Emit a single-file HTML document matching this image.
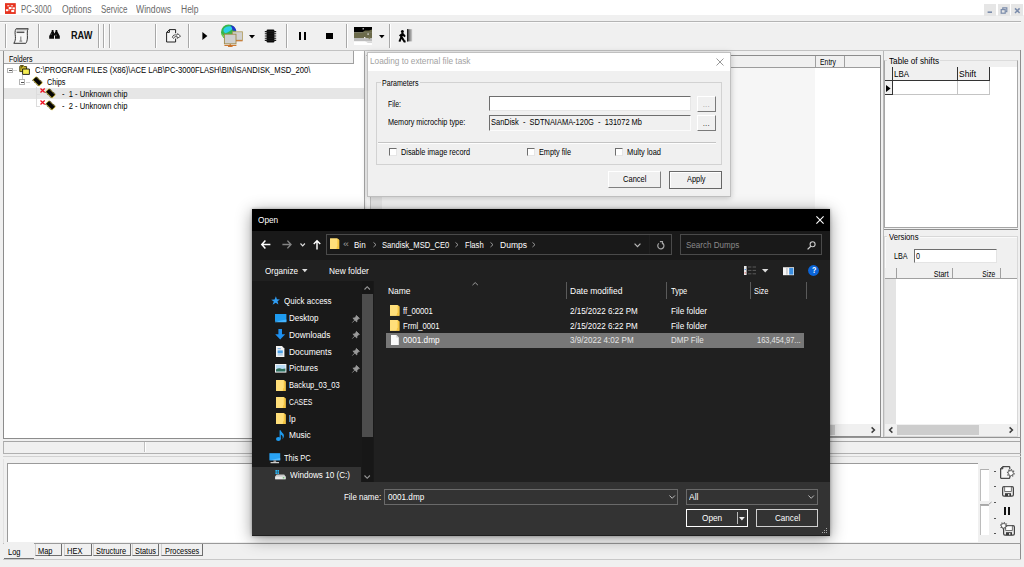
<!DOCTYPE html>
<html>
<head>
<meta charset="utf-8">
<title>PC-3000</title>
<style>
html,body{margin:0;padding:0;}
body{width:1024px;height:567px;overflow:hidden;background:#f0f0f0;font-family:"Liberation Sans",sans-serif;font-size:9px;color:#000;position:relative;}
div,span{box-sizing:border-box;}
.a{position:absolute;}
.t{position:absolute;white-space:pre;line-height:1;transform-origin:0 50%;display:block;}
svg{position:absolute;overflow:visible;}
</style>
</head>
<body>
<!-- menu bar --><div class="a" style="left:0px;top:0px;width:1024px;height:15px;background:#fff;"></div><svg style="left:5px;top:3.2px" width="10.8" height="11.1" viewBox="0 0 11 11"><rect width="11" height="11" fill="#e6321e"/><g fill="#fff"><rect x="2.3" y="2.2" width="2.1" height="1"/><rect x="5.9" y="2.2" width="2.3" height="1"/><rect x="3.8" y="4" width="2.9" height="2.1"/><rect x="7.6" y="4.3" width="2.4" height="2"/><rect x="0.9" y="6.2" width="2.4" height="2"/><rect x="6.4" y="7" width="3" height="2.1"/><rect x="3.4" y="6.4" width="1.4" height="1.2" fill="#f6b0a8"/></g></svg><span class="t" style="top:4.60px;font-size:10px;color:#6a6a6a;left:21.00px;transform:scaleX(0.7728);">PC-3000</span><span class="t" style="top:4.60px;font-size:10px;color:#6a6a6a;left:61.50px;transform:scaleX(0.8558);">Options</span><span class="t" style="top:4.60px;font-size:10px;color:#6a6a6a;left:100.50px;transform:scaleX(0.7944);">Service</span><span class="t" style="top:4.60px;font-size:10px;color:#6a6a6a;left:136.00px;transform:scaleX(0.8625);">Windows</span><span class="t" style="top:4.60px;font-size:10px;color:#6a6a6a;left:180.50px;transform:scaleX(0.8504);">Help</span><div class="a" style="left:984px;top:3.5px;width:12px;height:12.5px;background:#e6e6e6;"></div><div class="a" style="left:998px;top:3.5px;width:12px;height:12.5px;background:#e6e6e6;"></div><div class="a" style="left:1011px;top:3.5px;width:12px;height:12.5px;background:#e6e6e6;"></div><svg style="left:984px;top:3.5px" width="39" height="13" viewBox="0 0 39 13"><g stroke="#7b8cab" fill="none" stroke-width="1.2"><path d="M3.6 8.2 H8" stroke-width="1.6"/><rect x="17.2" y="5.6" width="4" height="3.6"/><path d="M18.8 5.2 V3.8 H22.8 V7.6 H21.6"/><path d="M31 4.4 L35.6 9 M35.6 4.4 L31 9" stroke-width="1.5"/></g></svg><!-- toolbar --><div class="a" style="left:0px;top:21px;width:1021px;height:1px;background:#b4b4b4;"></div><div class="a" style="left:0px;top:22px;width:1021px;height:1px;background:#fafafa;"></div><div class="a" style="left:5px;top:24px;width:1px;height:24px;background:#a8a8a8;box-shadow:1px 0 0 #fff;"></div><div class="a" style="left:37.5px;top:24px;width:1px;height:24px;background:#a8a8a8;box-shadow:1px 0 0 #fff;"></div><div class="a" style="left:98px;top:24px;width:1px;height:24px;background:#a8a8a8;box-shadow:1px 0 0 #fff;"></div><div class="a" style="left:103px;top:24px;width:1px;height:24px;background:#a8a8a8;box-shadow:1px 0 0 #fff;"></div><div class="a" style="left:109px;top:24px;width:1px;height:24px;background:#a8a8a8;box-shadow:1px 0 0 #fff;"></div><div class="a" style="left:155px;top:24px;width:1px;height:24px;background:#a8a8a8;box-shadow:1px 0 0 #fff;"></div><div class="a" style="left:188px;top:24px;width:1px;height:24px;background:#a8a8a8;box-shadow:1px 0 0 #fff;"></div><div class="a" style="left:286px;top:24px;width:1px;height:24px;background:#a8a8a8;box-shadow:1px 0 0 #fff;"></div><div class="a" style="left:346px;top:24px;width:1px;height:24px;background:#a8a8a8;box-shadow:1px 0 0 #fff;"></div><div class="a" style="left:389px;top:24px;width:1px;height:24px;background:#a8a8a8;box-shadow:1px 0 0 #fff;"></div><svg style="left:13px;top:28px" width="16" height="16" viewBox="0 0 16 16"><path d="M3.2 0.7 H15.2 C13.6 3 14.6 7 14.4 10 C14.2 12.6 13.6 14.4 12.8 15.3 H0.8 C2.2 13.6 2.6 11 2.4 8.6 C2.2 5.6 1.4 3 3.2 0.7 Z" fill="#f7f7f7" stroke="#333" stroke-width="1"/><path d="M3.4 1.6 H14" stroke="#9a9a9a" stroke-width="1.4"/><path d="M3.6 4.3 H11.4" stroke="#555" stroke-width="1.5"/><path d="M7.8 8.4 V13 M6.4 13.2 H9.2" stroke="#8a8a8a" stroke-width="1.2"/></svg><svg style="left:48.8px;top:30px" width="11" height="9" viewBox="0 0 11 9"><path d="M2.7 0 H4.5 V1.2 L5.1 2.4 V8.8 H0.2 V6 L2.1 2.4 L2.7 1.2 Z M6.5 0 H8.3 V1.2 L8.9 2.4 L10.8 6 V8.8 H5.9 V2.4 L6.5 1.2 Z" fill="#0a0a0a"/><rect x="4.6" y="3.2" width="1.8" height="2.2" fill="#0a0a0a"/><path d="M5.5 6 V8.8" stroke="#f0f0f0" stroke-width="0.9"/><path d="M1.8 5 L2.6 3.6 M7 4.6 L7.2 6.2" stroke="#8a8a8a" stroke-width="0.7"/></svg><span class="t" style="top:29.78px;font-size:10.6px;color:#111;left:70.60px;transform:scaleX(0.8657);font-weight:bold;">RAW</span><svg style="left:165.5px;top:28.5px" width="16" height="14" viewBox="0 0 16 14"><path d="M3.4 0.6 H9.6 V4.2 M9.6 9.6 V13 H0.6 V3.4 L3.4 0.6 M0.6 3.4 H3.4 V0.6" fill="#f6f6f6" stroke="#222" stroke-width="1"/><path d="M6.4 8.4 C6.6 6 9 5.4 11 6.2 L11.6 4.6 L14.6 7.2 L11.2 9.4 L11.4 7.8 C9.8 7.2 8.2 7.4 7.6 9.4 Z" fill="#fff" stroke="#444" stroke-width="0.9"/></svg><svg style="left:202px;top:32px" width="6" height="8" viewBox="0 0 6 8"><path d="M0.4 0 L5.4 4 L0.4 8 Z" fill="#000"/></svg><svg style="left:220px;top:23.5px" width="24" height="23" viewBox="0 0 24 23"><circle cx="8.6" cy="8.2" r="7.6" fill="#39b54a"/><path d="M4 4.6 C7 1.4 12 1.6 13.6 4.6 C11 5.4 9.4 8.6 5.4 9.2 C3.4 8.4 3 6.4 4 4.6 Z" fill="#29d0e8"/><path d="M10 1.2 C13.6 1.2 16 4 16.4 7 L12.6 6.6 C12.4 4 11.6 2.4 10 1.2 Z" fill="#2233cc"/><path d="M1.4 9.6 C2.4 13 5.6 15.4 9 15.6 L8 12 C5 12.4 3 11.4 1.4 9.6 Z" fill="#8fd94b"/><rect x="12.6" y="7.8" width="9.8" height="8.4" fill="#d0d0d0" stroke="#b09a5a" stroke-width="0.8"/><rect x="4.4" y="10.2" width="11.6" height="9.6" fill="#cfcfcf" stroke="#a08a4a" stroke-width="0.9"/><path d="M16 16.8 H22.6 M4.4 21.4 H16.4 M10.2 20 V22.6 M8 22.4 H12.6" stroke="#c86a1c" stroke-width="1"/></svg><svg style="left:248.5px;top:35px" width="6" height="3.4" viewBox="0 0 6 3.4"><path d="M0 0 H6 L3 3.4 Z" fill="#000"/></svg><svg style="left:263.5px;top:28.5px" width="13" height="14" viewBox="0 0 13 14"><rect x="2.6" y="0.6" width="7.8" height="12.8" rx="1.2" fill="#0a0a0a"/><path d="M0.8 2.6 H12.2 M0.8 4.8 H12.2 M0.8 7 H12.2 M0.8 9.2 H12.2 M0.8 11.4 H12.2" stroke="#1a1a1a" stroke-width="1.1"/></svg><div class="a" style="left:299.4px;top:32px;width:2px;height:8px;background:#000;"></div><div class="a" style="left:303.5px;top:32px;width:2px;height:8px;background:#000;"></div><div class="a" style="left:326px;top:33px;width:6.6px;height:6.2px;background:#000;"></div><svg style="left:353.5px;top:26.5px" width="18" height="18" viewBox="0 0 18 18"><rect width="18" height="18" fill="#fff"/><rect width="18" height="5.4" fill="#000"/><rect y="5.4" width="18" height="5.6" fill="#6b6a4a"/><path d="M8 5.4 L11 3.6 H15 L18 2.4 V5.4 Z" fill="#6b6a4a"/><rect y="11" width="18" height="3.2" fill="#bdbdbd"/><path d="M0 14.2 H11 L14 16 H18 V14.2" fill="#d8d8d8"/><rect x="8.6" y="1.2" width="1.2" height="1.2" fill="#fff"/><rect x="13.4" y="6.4" width="1.4" height="1.4" fill="#ddd"/><rect x="10" y="10" width="1.4" height="1.4" fill="#eee"/><rect x="14.6" y="10.6" width="1.6" height="1.6" fill="#8a8a6a"/></svg><svg style="left:379.4px;top:35px" width="5.6" height="3.2" viewBox="0 0 5.6 3.2"><path d="M0 0 H5.6 L2.8 3.2 Z" fill="#000"/></svg><svg style="left:398px;top:28.5px" width="14" height="14" viewBox="0 0 14 14"><defs><linearGradient id="dg" x1="0" x2="1"><stop offset="0" stop-color="#3a3a3a"/><stop offset="1" stop-color="#cfcfcf"/></linearGradient></defs><rect x="9" y="0.2" width="5.2" height="12.2" fill="url(#dg)"/><rect x="9" y="0.2" width="1.2" height="12.2" fill="#222"/><circle cx="4.4" cy="2.6" r="1.5" fill="#000"/><path d="M4.6 4 L3.4 8 L1.4 12.6 M3.8 8.4 L6.4 12.6 H7.6 M4.2 5 L1.6 7 M4.8 5 L7 7.6" stroke="#000" stroke-width="2" fill="none"/></svg><div class="a" style="left:0px;top:49.6px;width:1021px;height:1px;background:#c2c2c2;"></div><div class="a" style="left:3px;top:50.5px;width:361.5px;height:1px;background:#8a8a8a;"></div><div class="a" style="left:1020px;top:50px;width:1.4px;height:510px;background:#8e8e8e;"></div><!-- folders panel --><div class="a" style="left:3px;top:51px;width:361.5px;height:388px;background:#fff;border:1px solid #8c8c8c;border-top:none;border-right-color:#a6a6a6;"></div><div class="a" style="left:4px;top:51px;width:350px;height:12.5px;background:#f0f0f0;border-right:1px solid #a0a0a0;border-bottom:1px solid #a0a0a0;"></div><span class="t" style="top:54.75px;font-size:8.4px;color:#000;left:8.50px;transform:scaleX(0.8376);">Folders</span><div class="a" style="left:4px;top:87.8px;width:359.5px;height:11px;background:#e6e6e6;"></div><div class="a" style="left:7.2px;top:67.6px;width:5.8px;height:5.8px;background:#fff;border:1px solid #b4b4b4;"></div><div class="a" style="left:8.6px;top:70px;width:3px;height:1px;background:#555;"></div><div class="a" style="left:13.4px;top:70px;width:4px;height:1px;background:#d4d4d4;"></div><div class="a" style="left:19.4px;top:79.4px;width:5.8px;height:5.8px;background:#fff;border:1px solid #b4b4b4;"></div><div class="a" style="left:20.8px;top:81.8px;width:3px;height:1px;background:#555;"></div><div class="a" style="left:22px;top:75px;width:1px;height:4.4px;background:#c8c8c8;"></div><div class="a" style="left:25.6px;top:81.8px;width:4px;height:1px;background:#d4d4d4;"></div><div class="a" style="left:35.6px;top:87px;width:1px;height:19px;background:#dcdcdc;"></div><div class="a" style="left:35.6px;top:94px;width:4px;height:1px;background:#dcdcdc;"></div><div class="a" style="left:35.6px;top:105.6px;width:4px;height:1px;background:#dcdcdc;"></div><svg style="left:19.2px;top:64.8px" width="11" height="10" viewBox="0 0 11 10"><path d="M0.8 1.6 Q0.8 0.6 1.8 0.6 H4.4 L5.4 1.6 H7.6 V6.6 H0.8 Z" fill="#c9b92e" stroke="#3a3200" stroke-width="0.9"/><path d="M2 1.6 H4 M1.8 2.8 H3" stroke="#3a3200" stroke-width="0.7"/><path d="M3.6 4 H10.4 V9.4 H3.6 Z" fill="#f6ee52" stroke="#111" stroke-width="0.9"/></svg><svg style="left:32.1px;top:76px" width="11" height="10.6" viewBox="0 0 11 10.6"><path d="M0.3 3.7 L4.1 0.2 L10.8 6.8 L7 10.4 Z" fill="#d4bc28"/><path d="M1.1 3.8 L4.1 1.1 L10 6.8 L7 9.5 Z" fill="#050505"/><path d="M0.5 4.3 L1.3 5.1 M2.1 5.9 L2.9 6.7 M3.7 7.4 L4.5 8.2 M5.3 8.9 L6.1 9.7 M5 0.9 L5.8 1.7 M6.6 2.5 L7.4 3.3 M8.2 4 L9 4.8 M9.6 5.4 L10.3 6.1" stroke="#050505" stroke-width="0.8"/></svg><svg style="left:45.2px;top:88px" width="11" height="10.6" viewBox="0 0 11 10.6"><path d="M0.3 3.7 L4.1 0.2 L10.8 6.8 L7 10.4 Z" fill="#d4bc28"/><path d="M1.1 3.8 L4.1 1.1 L10 6.8 L7 9.5 Z" fill="#050505"/><path d="M0.5 4.3 L1.3 5.1 M2.1 5.9 L2.9 6.7 M3.7 7.4 L4.5 8.2 M5.3 8.9 L6.1 9.7 M5 0.9 L5.8 1.7 M6.6 2.5 L7.4 3.3 M8.2 4 L9 4.8 M9.6 5.4 L10.3 6.1" stroke="#050505" stroke-width="0.8"/></svg><svg style="left:39.9px;top:88px" width="5.2" height="5" viewBox="0 0 5.2 5"><path d="M0.5 0.5 L4.7 4.5 M4.7 0.5 L0.5 4.5" stroke="#ee1020" stroke-width="1.3"/></svg><svg style="left:45.2px;top:99.8px" width="11" height="10.6" viewBox="0 0 11 10.6"><path d="M0.3 3.7 L4.1 0.2 L10.8 6.8 L7 10.4 Z" fill="#d4bc28"/><path d="M1.1 3.8 L4.1 1.1 L10 6.8 L7 9.5 Z" fill="#050505"/><path d="M0.5 4.3 L1.3 5.1 M2.1 5.9 L2.9 6.7 M3.7 7.4 L4.5 8.2 M5.3 8.9 L6.1 9.7 M5 0.9 L5.8 1.7 M6.6 2.5 L7.4 3.3 M8.2 4 L9 4.8 M9.6 5.4 L10.3 6.1" stroke="#050505" stroke-width="0.8"/></svg><svg style="left:39.9px;top:99.8px" width="5.2" height="5" viewBox="0 0 5.2 5"><path d="M0.5 0.5 L4.7 4.5 M4.7 0.5 L0.5 4.5" stroke="#ee1020" stroke-width="1.3"/></svg><span class="t" style="top:65.95px;font-size:8.4px;color:#000;left:34.60px;transform:scaleX(0.9117);">C:\PROGRAM FILES (X86)\ACE LAB\PC-3000FLASH\BIN\SANDISK_MSD_200\</span><span class="t" style="top:77.85px;font-size:8.4px;color:#000;left:47.00px;transform:scaleX(0.8636);">Chips</span><span class="t" style="top:89.65px;font-size:8.4px;color:#000;left:61.50px;transform:scaleX(0.9078);">-  1 - Unknown chip</span><span class="t" style="top:101.65px;font-size:8.4px;color:#000;left:61.50px;transform:scaleX(0.9078);">-  2 - Unknown chip</span><!-- middle panel --><div class="a" style="left:366px;top:55px;width:515px;height:382px;background:#f6f6f6;border:1px solid #8c8c8c;border-left-color:#f6f6f6;"></div><div class="a" style="left:367px;top:68px;width:3.4px;height:356px;background:#fbfbfb;"></div><div class="a" style="left:370px;top:68px;width:0.8px;height:356px;background:#c4c4c4;"></div><div class="a" style="left:815px;top:56px;width:65px;height:380px;background:#fff;"></div><div class="a" style="left:370.8px;top:68px;width:11.2px;height:356px;background:#e9e9e9;"></div><div class="a" style="left:367px;top:56px;width:513px;height:11.5px;background:#f0f0f0;border-bottom:1px solid #9c9c9c;"></div><div class="a" style="left:814.5px;top:56px;width:1px;height:11px;background:#a0a0a0;"></div><div class="a" style="left:843.5px;top:56px;width:1px;height:11px;background:#a0a0a0;"></div><span class="t" style="top:57.75px;font-size:8.4px;color:#000;left:819.50px;transform:scaleX(0.8179);">Entry</span><div class="a" style="left:367px;top:424px;width:513px;height:12px;background:#f0f0f0;"></div><div class="a" style="left:378px;top:425px;width:457px;height:10px;background:#cdcdcd;"></div><svg style="left:871px;top:427px" width="4" height="6" viewBox="0 0 4 6"><path d="M0.6 0.4 L3.4 3 L0.6 5.6" stroke="#3c3c3c" stroke-width="1.5" fill="none"/></svg><!-- right panel --><div class="a" style="left:883px;top:51px;width:1px;height:386px;background:#b8b8b8;"></div><div class="a" style="left:883.5px;top:60px;width:134.2px;height:168px;background:#f0f0f0;border:1px solid #a6a6a6;border-top-color:#dcdcdc;"></div><div class="a" style="left:884.5px;top:67px;width:132.2px;height:160px;background:#fff;"></div><div class="a" style="left:887px;top:56px;width:53px;height:9px;background:#f0f0f0;"></div><span class="t" style="top:56.02px;font-size:9.4px;color:#000;left:888.70px;transform:scaleX(0.8722);">Table of shifts</span><div class="a" style="left:885px;top:67px;width:7.5px;height:13.5px;background:#f0f0f0;border-right:1.5px solid #333;border-bottom:1.5px solid #333;"></div><div class="a" style="left:892.5px;top:67px;width:65px;height:13.5px;background:#f0f0f0;border-right:1.5px solid #333;border-bottom:1.5px solid #333;"></div><div class="a" style="left:957.5px;top:67px;width:32px;height:13.5px;background:#f0f0f0;border-right:1.5px solid #333;border-bottom:1.5px solid #333;"></div><span class="t" style="top:69.22px;font-size:9.4px;color:#000;left:894.00px;transform:scaleX(0.8458);">LBA</span><span class="t" style="top:69.22px;font-size:9.4px;color:#000;left:959.00px;transform:scaleX(0.9059);">Shift</span><div class="a" style="left:885px;top:80.5px;width:7.5px;height:14px;background:#f0f0f0;border-right:1.5px solid #333;border-bottom:1.5px solid #333;"></div><div class="a" style="left:892.5px;top:80.5px;width:65px;height:14px;border-right:1px solid #c4c4c4;border-bottom:1px solid #c4c4c4;"></div><div class="a" style="left:957.5px;top:80.5px;width:32px;height:14px;border-right:1px solid #c4c4c4;border-bottom:1px solid #c4c4c4;"></div><svg style="left:886px;top:84.5px" width="5" height="7" viewBox="0 0 5 7"><path d="M0 0 L4.6 3.5 L0 7 Z" fill="#000"/></svg><div class="a" style="left:883.5px;top:228.8px;width:134.5px;height:1.2px;background:#8e8e8e;"></div><div class="a" style="left:884px;top:235.6px;width:133.5px;height:201.4px;background:#f0f0f0;border:1px solid #d8d8d8;box-shadow:inset 1px 1px 0 #fafafa;"></div><div class="a" style="left:887px;top:232px;width:33px;height:9px;background:#f0f0f0;"></div><span class="t" style="top:232.22px;font-size:9.4px;color:#000;left:888.70px;transform:scaleX(0.8202);">Versions</span><span class="t" style="top:251.55px;font-size:8.4px;color:#000;left:894.00px;transform:scaleX(0.8521);">LBA</span><div class="a" style="left:914px;top:248.5px;width:83px;height:14.5px;background:#fff;border-top:1.5px solid #6e6e6e;border-left:1.5px solid #6e6e6e;border-bottom:1px solid #e4e4e4;border-right:1px solid #e4e4e4;"></div><span class="t" style="top:251.55px;font-size:8.4px;color:#000;left:916.00px;transform:scaleX(0.8562);">0</span><div class="a" style="left:885px;top:268px;width:131.5px;height:156px;background:#fff;"></div><div class="a" style="left:885px;top:268px;width:131.5px;height:10.5px;background:#f0f0f0;border-bottom:1px solid #a0a0a0;"></div><div class="a" style="left:885px;top:278.5px;width:10.5px;height:145.5px;background:#e4e4e4;"></div><div class="a" style="left:895.5px;top:268px;width:1px;height:10px;background:#a0a0a0;"></div><div class="a" style="left:951.5px;top:268px;width:1px;height:10px;background:#a0a0a0;"></div><div class="a" style="left:1000px;top:268px;width:1px;height:10px;background:#a0a0a0;"></div><span class="t" style="top:269.55px;font-size:8.4px;color:#000;right:75.50px;transform-origin:100% 50%;transform:scaleX(0.8481);">Start</span><span class="t" style="top:269.55px;font-size:8.4px;color:#000;right:29.00px;transform-origin:100% 50%;transform:scaleX(0.7977);">Size</span><div class="a" style="left:885px;top:424px;width:131.5px;height:12px;background:#f0f0f0;"></div><div class="a" style="left:897px;top:425px;width:82px;height:10px;background:#cdcdcd;"></div><svg style="left:888.5px;top:427px" width="4" height="6" viewBox="0 0 4 6"><path d="M3.4 0.4 L0.6 3 L3.4 5.6" stroke="#3c3c3c" stroke-width="1.5" fill="none"/></svg><svg style="left:1008.5px;top:427px" width="4" height="6" viewBox="0 0 4 6"><path d="M0.6 0.4 L3.4 3 L0.6 5.6" stroke="#3c3c3c" stroke-width="1.5" fill="none"/></svg><div class="a" style="left:366px;top:436.7px;width:655px;height:1.5px;background:#949494;"></div><!-- status + log --><div class="a" style="left:3px;top:441px;width:1017px;height:12px;background:#f0f0f0;border-top:1px solid #a6a6a6;border-left:1px solid #b0b0b0;"></div><div class="a" style="left:144px;top:442px;width:1px;height:10px;background:#c0c0c0;"></div><div class="a" style="left:145px;top:442px;width:1px;height:10px;background:#fff;"></div><div class="a" style="left:3px;top:453px;width:1018px;height:1px;background:#b0b0b0;"></div><div class="a" style="left:3px;top:456px;width:1018px;height:1px;background:#d2d2d2;"></div><div class="a" style="left:3px;top:458.5px;width:1018px;height:85px;background:#f0f0f0;border-left:1px solid #e2e2e2;border-right:1px solid #9a9a9a;border-bottom:1px solid #9a9a9a;"></div><div class="a" style="left:7px;top:463px;width:971px;height:78.5px;background:#fff;border-top:1px solid #9a9a9a;border-left:1px solid #9a9a9a;"></div><div class="a" style="left:980.4px;top:469px;width:9px;height:32px;background:#fff;border-top:1px solid #b0b0b0;border-left:1px solid #bcbcbc;"></div><div class="a" style="left:980.4px;top:505.3px;width:9px;height:30.2px;background:#fff;border-top:1px solid #b0b0b0;border-left:1px solid #bcbcbc;"></div><svg style="left:979px;top:498.6px" width="14" height="8" viewBox="0 0 14 8"><path d="M1 5.6 H9.4 L12.6 3" stroke="#a0a0a0" stroke-width="1" fill="none"/></svg><div class="a" style="left:993.5px;top:471px;width:2.5px;height:1px;background:#555;"></div><div class="a" style="left:993.5px;top:486.2px;width:2.5px;height:1px;background:#555;"></div><div class="a" style="left:993.5px;top:502.4px;width:2.5px;height:1px;background:#555;"></div><div class="a" style="left:993.5px;top:518px;width:2.5px;height:1px;background:#555;"></div><div class="a" style="left:993.5px;top:533.2px;width:2.5px;height:1px;background:#555;"></div><svg style="left:1000px;top:466px" width="15" height="13" viewBox="0 0 15 13"><path d="M2.6 0.7 H9.8 V3.4 M9.8 10.4 V12.3 H0.7 V2.6 L2.6 0.7 M0.7 2.8 H2.8 V0.7" fill="#f6f6f6" stroke="#222" stroke-width="1"/><polygon points="14.62,7.87 12.54,8.27 12.95,10.35 11.20,9.16 10.03,10.92 9.63,8.84 7.55,9.25 8.74,7.50 6.98,6.33 9.06,5.93 8.65,3.85 10.40,5.04 11.57,3.28 11.97,5.36 14.05,4.95 12.86,6.70" fill="#fff" stroke="#555" stroke-width="0.9"/></svg><svg style="left:1001.5px;top:486px" width="12" height="11" viewBox="0 0 12 11"><rect x="0.6" y="0.6" width="10.8" height="9.6" rx="1.4" fill="#e8e8e8" stroke="#444" stroke-width="1.2"/><rect x="2.7" y="0.8" width="6.6" height="4.6" fill="#fff" stroke="#555" stroke-width="0.8"/><rect x="3" y="7.2" width="6" height="3" fill="#3a3a3a"/><rect x="6" y="8" width="1.4" height="1.8" fill="#ddd"/></svg><div class="a" style="left:1004.1px;top:507px;width:1.8px;height:7.6px;background:#111;"></div><div class="a" style="left:1008px;top:507px;width:1.8px;height:7.6px;background:#111;"></div><svg style="left:1002.5px;top:525px" width="12" height="11" viewBox="0 0 12 11"><rect x="0.6" y="0.6" width="10.8" height="9.6" rx="1.4" fill="#e8e8e8" stroke="#444" stroke-width="1.2"/><rect x="2.7" y="0.8" width="6.6" height="4.6" fill="#fff" stroke="#555" stroke-width="0.8"/><rect x="3" y="7.2" width="6" height="3" fill="#3a3a3a"/><rect x="6" y="8" width="1.4" height="1.8" fill="#ddd"/></svg><svg style="left:999.6px;top:522px" width="7.4" height="7.4" viewBox="0 0 7.4 7.4"><polygon points="7.13,4.40 5.28,4.76 5.63,6.62 4.06,5.56 3.00,7.13 2.64,5.28 0.78,5.63 1.84,4.06 0.27,3.00 2.12,2.64 1.77,0.78 3.34,1.84 4.40,0.27 4.76,2.12 6.62,1.77 5.56,3.34" fill="#fff" stroke="#555" stroke-width="0.9"/></svg><!-- tabs --><div class="a" style="left:4px;top:542px;width:30px;height:16.6px;background:#f0f0f0;border-bottom:1.6px solid #747474;"></div><span class="t" style="top:547.83px;font-size:9px;color:#000;left:8.40px;transform:scaleX(0.8316);">Log</span><div class="a" style="left:34.5px;top:543.5px;width:27.5px;height:12.5px;background:#f0f0f0;border-left:1px solid #d0d0d0;border-right:1.5px solid #6e6e6e;border-bottom:1.5px solid #6e6e6e;"></div><span class="t" style="top:546.63px;font-size:9px;color:#000;left:38.20px;transform:scaleX(0.8278);">Map</span><div class="a" style="left:63.5px;top:543.5px;width:28px;height:12.5px;background:#f0f0f0;border-left:1px solid #d0d0d0;border-right:1.5px solid #6e6e6e;border-bottom:1.5px solid #6e6e6e;"></div><span class="t" style="top:546.63px;font-size:9px;color:#000;left:67.40px;transform:scaleX(0.8317);">HEX</span><div class="a" style="left:93px;top:543.5px;width:37.5px;height:12.5px;background:#f0f0f0;border-left:1px solid #d0d0d0;border-right:1.5px solid #6e6e6e;border-bottom:1.5px solid #6e6e6e;"></div><span class="t" style="top:546.63px;font-size:9px;color:#000;left:96.40px;transform:scaleX(0.8216);">Structure</span><div class="a" style="left:131.5px;top:543.5px;width:27.5px;height:12.5px;background:#f0f0f0;border-left:1px solid #d0d0d0;border-right:1.5px solid #6e6e6e;border-bottom:1.5px solid #6e6e6e;"></div><span class="t" style="top:546.63px;font-size:9px;color:#000;left:134.80px;transform:scaleX(0.8230);">Status</span><div class="a" style="left:160.5px;top:543.5px;width:42px;height:12.5px;background:#f0f0f0;border-left:1px solid #d0d0d0;border-right:1.5px solid #6e6e6e;border-bottom:1.5px solid #6e6e6e;"></div><span class="t" style="top:546.63px;font-size:9px;color:#000;left:164.60px;transform:scaleX(0.8137);">Processes</span><div class="a" style="left:3px;top:558.5px;width:1018px;height:1px;background:#c8c8c8;"></div><!-- loading dialog --><div class="a" style="left:366.8px;top:52px;width:363.8px;height:144.8px;background:#f0f0f0;border:1px solid #c0c0c0;box-shadow:0 1px 6px rgba(0,0,0,.22);"></div><div class="a" style="left:367.8px;top:53px;width:361.8px;height:17.5px;background:#fff;"></div><span class="t" style="top:57.43px;font-size:9px;color:#a2a2a2;left:370.00px;transform:scaleX(0.9172);">Loading to external file task</span><svg style="left:715.5px;top:57.5px" width="8" height="8" viewBox="0 0 8 8"><path d="M0.5 0.5 L7.5 7.5 M7.5 0.5 L0.5 7.5" stroke="#8c8c8c" stroke-width="0.9"/></svg><div class="a" style="left:376px;top:82px;width:345.5px;height:82.5px;border:1px solid #d2d2d2;"></div><div class="a" style="left:380.5px;top:78px;width:39px;height:9px;background:#f0f0f0;"></div><span class="t" style="top:78.75px;font-size:8.4px;color:#000;left:382.00px;transform:scaleX(0.8430);">Parameters</span><span class="t" style="top:99.75px;font-size:8.4px;color:#000;left:388.00px;transform:scaleX(0.8213);">File:</span><span class="t" style="top:118.45px;font-size:8.4px;color:#000;left:388.00px;transform:scaleX(0.8685);">Memory microchip type:</span><div class="a" style="left:489px;top:96px;width:202px;height:15.4px;background:#fff;border-top:1.5px solid #6e6e6e;border-left:1.5px solid #6e6e6e;border-bottom:1px solid #e6e6e6;border-right:1px solid #e6e6e6;"></div><div class="a" style="left:489px;top:114.6px;width:202px;height:16px;background:#f0f0f0;border-top:1.5px solid #6e6e6e;border-left:1.5px solid #6e6e6e;border-bottom:1px solid #fbfbfb;border-right:1px solid #fbfbfb;"></div><span class="t" style="top:117.75px;font-size:8.4px;color:#000;left:491.00px;transform:scaleX(0.8912);">SanDisk  -  SDTNAIAMA-120G  -  131072 Mb</span><div class="a" style="left:697px;top:95.8px;width:18.5px;height:16.4px;background:#f0f0f0;border-top:1px solid #fff;border-left:1px solid #fff;border-right:1.5px solid #7a7a7a;border-bottom:1.5px solid #7a7a7a;"></div><div class="a" style="left:697px;top:114.6px;width:18.5px;height:16.4px;background:#f0f0f0;border-top:1px solid #fff;border-left:1px solid #fff;border-right:1.5px solid #7a7a7a;border-bottom:1.5px solid #7a7a7a;"></div><span class="t" style="top:100.15px;font-size:8.4px;color:#9a9a9a;left:703.20px;transform:scaleX(0.7454);letter-spacing:0.8px;">...</span><span class="t" style="top:118.55px;font-size:8.4px;color:#111;left:703.20px;transform:scaleX(0.7454);letter-spacing:0.8px;">...</span><div class="a" style="left:378px;top:142px;width:337.5px;height:1px;background:#c4c4c4;"></div><div class="a" style="left:378px;top:143px;width:337.5px;height:1px;background:#fdfdfd;"></div><div class="a" style="left:388.5px;top:148px;width:8px;height:8px;background:#fff;border-top:1.5px solid #6e6e6e;border-left:1.5px solid #6e6e6e;border-bottom:1px solid #e6e6e6;border-right:1px solid #e6e6e6;"></div><div class="a" style="left:526.8px;top:148px;width:8px;height:8px;background:#fff;border-top:1.5px solid #6e6e6e;border-left:1.5px solid #6e6e6e;border-bottom:1px solid #e6e6e6;border-right:1px solid #e6e6e6;"></div><div class="a" style="left:615px;top:148px;width:8px;height:8px;background:#fff;border-top:1.5px solid #6e6e6e;border-left:1.5px solid #6e6e6e;border-bottom:1px solid #e6e6e6;border-right:1px solid #e6e6e6;"></div><span class="t" style="top:147.85px;font-size:8.4px;color:#000;left:401.00px;transform:scaleX(0.8719);">Disable image record</span><span class="t" style="top:147.85px;font-size:8.4px;color:#000;left:539.00px;transform:scaleX(0.8700);">Empty file</span><span class="t" style="top:147.85px;font-size:8.4px;color:#000;left:627.30px;transform:scaleX(0.8907);">Multy load</span><div class="a" style="left:608.3px;top:170.5px;width:52.4px;height:17.9px;background:#f0f0f0;border-top:1px solid #fff;border-left:1px solid #fff;border-right:1.6px solid #808080;border-bottom:1.6px solid #808080;"></div><div class="a" style="left:669.4px;top:170.5px;width:52.7px;height:18.5px;background:#f0f0f0;border:1.3px solid #6a6a6a;border-right:1.9px solid #666;border-bottom:1.9px solid #666;box-shadow:inset 1px 1px 0 #fff;"></div><span class="t" style="top:175.35px;font-size:8.4px;color:#000;left:623.00px;transform:scaleX(0.9011);">Cancel</span><span class="t" style="top:175.35px;font-size:8.4px;color:#000;left:686.50px;transform:scaleX(0.8829);">Apply</span><!-- open dialog --><div class="a" style="left:252px;top:209px;width:578px;height:326.5px;background:#202020;box-shadow:0 3px 15px rgba(0,0,0,.42),0 0 3px rgba(0,0,0,.3);"></div><div class="a" style="left:252px;top:209px;width:578px;height:21.6px;background:#000;"></div><span class="t" style="top:216.17px;font-size:9.2px;color:#fff;left:258.00px;transform:scaleX(0.8984);">Open</span><svg style="left:815.6px;top:216px" width="8" height="8" viewBox="0 0 8 8"><path d="M0.4 0.4 L7.6 7.6 M7.6 0.4 L0.4 7.6" stroke="#fff" stroke-width="1.1"/></svg><div class="a" style="left:252px;top:231px;width:578px;height:29px;background:#191919;"></div><svg style="left:261px;top:240px" width="10" height="9" viewBox="0 0 10 9"><path d="M4.4 0.6 L0.8 4.5 L4.4 8.4 M0.8 4.5 H9.4" stroke="#fff" stroke-width="1.5" fill="none"/></svg><svg style="left:282px;top:240px" width="10" height="9" viewBox="0 0 10 9"><path d="M5.4 0.6 L9 4.5 L5.4 8.4 M9 4.5 H0.4" stroke="#848484" stroke-width="1.4" fill="none"/></svg><svg style="left:300.4px;top:242.8px" width="5.4" height="3.6" viewBox="0 0 5.4 3.6"><path d="M0.5 0.5 L2.7 2.8 L4.9 0.5" stroke="#ddd" stroke-width="1.2" fill="none"/></svg><svg style="left:313.4px;top:240.4px" width="8" height="9.6" viewBox="0 0 8 10"><path d="M0.6 4.2 L4 0.8 L7.4 4.2 M4 0.8 V9.8" stroke="#fff" stroke-width="1.5" fill="none"/></svg><div class="a" style="left:326.2px;top:234.3px;width:345.8px;height:20.6px;background:#191919;border:1px solid #4a4a4a;"></div><div class="a" style="left:648.6px;top:235.3px;width:1px;height:18.6px;background:#1f1f1f;"></div><svg style="left:329.7px;top:238.3px" width="9.2" height="11.6" viewBox="0 0 9.6 11"><path d="M0 0.4 Q0 0 0.4 0 H7.6 L9.6 1.6 V11 H0 Z" fill="#ffd966"/><path d="M7.6 0 L9.6 1.6 V11 H6.6 L7 8.6 L7.6 8 Z" fill="#f5c542"/><path d="M0 0 H7.6 V8 L7 8.6 L6.6 11 H0 Z" fill="#ffdf7a"/></svg><span class="t" style="top:239.22px;font-size:9.4px;color:#999;left:343.00px;transform:scaleX(1.1497);">«</span><span class="t" style="top:240.67px;font-size:9.2px;color:#fff;left:354.40px;transform:scaleX(0.8734);">Bin</span><span class="t" style="top:240.67px;font-size:9.2px;color:#fff;left:382.00px;transform:scaleX(0.8288);">Sandisk_MSD_CE0</span><span class="t" style="top:240.67px;font-size:9.2px;color:#fff;left:464.50px;transform:scaleX(0.8323);">Flash</span><span class="t" style="top:240.67px;font-size:9.2px;color:#fff;left:499.60px;transform:scaleX(0.9275);">Dumps</span><svg style="left:372.8px;top:242.2px" width="3.6" height="5.4" viewBox="0 0 3.6 5.4"><path d="M0.5 0.4 L3 2.7 L0.5 5" stroke="#9a9a9a" stroke-width="1" fill="none"/></svg><svg style="left:455px;top:242.2px" width="3.6" height="5.4" viewBox="0 0 3.6 5.4"><path d="M0.5 0.4 L3 2.7 L0.5 5" stroke="#9a9a9a" stroke-width="1" fill="none"/></svg><svg style="left:490.2px;top:242.2px" width="3.6" height="5.4" viewBox="0 0 3.6 5.4"><path d="M0.5 0.4 L3 2.7 L0.5 5" stroke="#9a9a9a" stroke-width="1" fill="none"/></svg><svg style="left:532.2px;top:242.2px" width="3.6" height="5.4" viewBox="0 0 3.6 5.4"><path d="M0.5 0.4 L3 2.7 L0.5 5" stroke="#9a9a9a" stroke-width="1" fill="none"/></svg><svg style="left:633.8px;top:243.4px" width="7" height="4.4" viewBox="0 0 7.4 4.6"><path d="M0.6 0.6 L3.7 3.8 L6.8 0.6" stroke="#b8b8b8" stroke-width="1.3" fill="none"/></svg><svg style="left:656.6px;top:240.8px" width="7.6" height="8.4" viewBox="0 0 7.6 8.4"><path d="M4.9 1.9 A3.1 3.1 0 1 1 1.9 2.4" stroke="#a6a6a6" stroke-width="1.2" fill="none"/><path d="M2.9 0.6 H5.5 V3.2" stroke="#a6a6a6" stroke-width="1.1" fill="none"/></svg><div class="a" style="left:680.2px;top:234.3px;width:141.4px;height:20.6px;background:#191919;border:1px solid #4a4a4a;"></div><span class="t" style="top:240.67px;font-size:9.2px;color:#8a8a8a;left:686.40px;transform:scaleX(0.8755);">Search Dumps</span><svg style="left:807px;top:240.6px" width="9" height="9" viewBox="0 0 9 9"><circle cx="5.6" cy="3.3" r="2.5" stroke="#ccc" stroke-width="1.1" fill="none"/><path d="M3.8 5.2 L0.6 8.4" stroke="#ccc" stroke-width="1.3"/></svg><span class="t" style="top:266.77px;font-size:9.2px;color:#fff;left:265.00px;transform:scaleX(0.8852);">Organize</span><svg style="left:301.6px;top:269.2px" width="5.6" height="3.2" viewBox="0 0 5.6 3.2"><path d="M0 0 H5.6 L2.8 3.2 Z" fill="#ddd"/></svg><span class="t" style="top:266.77px;font-size:9.2px;color:#fff;left:328.60px;transform:scaleX(0.9062);">New folder</span><svg style="left:744px;top:266px" width="13" height="9" viewBox="0 0 13 9"><rect x="0" y="0" width="2.6" height="9" fill="#e8e8e8"/><rect x="0.6" y="3" width="1.4" height="1" fill="#5a8fd8"/><rect x="0.6" y="6.4" width="1.4" height="1" fill="#d85a5a"/><path d="M4 1 H7.4 M8.6 1 H12 M4 4.4 H7.4 M8.6 4.4 H12 M4 7.8 H7.4 M8.6 7.8 H12" stroke="#626262" stroke-width="0.9"/></svg><svg style="left:762px;top:269px" width="6.4" height="3.6" viewBox="0 0 6.4 3.6"><path d="M0 0 H6.4 L3.2 3.6 Z" fill="#ddd"/></svg><svg style="left:783.2px;top:266.6px" width="11" height="8.2" viewBox="0 0 11 8.2"><rect width="11" height="8.2" fill="#f6f6f6"/><rect width="11" height="0.9" fill="#bdbdbd"/><rect x="3" y="1" width="1.8" height="6.6" fill="#cfcfcf"/><rect x="6.2" y="1" width="4.2" height="6.6" fill="#3b8ee0"/></svg><svg style="left:808.2px;top:265.2px" width="11" height="11" viewBox="0 0 11 11"><circle cx="5.5" cy="5.5" r="5.4" fill="#0a64d8"/></svg><span class="t" style="top:266.13px;font-size:9px;color:#fff;left:811.60px;transform:scaleX(0.8000);font-weight:bold;">?</span><div class="a" style="left:252px;top:281px;width:122px;height:201.5px;background:#191919;"></div><div class="a" style="left:362px;top:281px;width:11px;height:201.5px;background:#171717;"></div><div class="a" style="left:362px;top:294px;width:11px;height:143px;background:#4d4d4d;"></div><svg style="left:364.4px;top:286px" width="6.4" height="4" viewBox="0 0 6.4 4"><path d="M0.5 3.5 L3.2 0.7 L5.9 3.5" stroke="#999" stroke-width="1.1" fill="none"/></svg><svg style="left:364.4px;top:475px" width="6.4" height="4" viewBox="0 0 6.4 4"><path d="M0.5 0.5 L3.2 3.3 L5.9 0.5" stroke="#999" stroke-width="1.1" fill="none"/></svg><div class="a" style="left:252px;top:467px;width:109px;height:15.5px;background:#333;"></div><svg style="left:271px;top:296.4px" width="9" height="9" viewBox="0 0 9 9"><path d="M4.9 0.2 L5.9 3.3 L8.9 3.4 L6.5 5.3 L7.4 8.6 L4.7 6.7 L1.6 8.8 L2.8 5.4 L0.2 3.8 L3.6 3.4 Z" fill="#2f9df4"/></svg><span class="t" style="top:297.37px;font-size:9.2px;color:#fff;left:283.70px;transform:scaleX(0.8711);">Quick access</span><svg style="left:274.6px;top:313.8px" width="11.4" height="8.2" viewBox="0 0 11.4 8.8" preserveAspectRatio="none"><rect width="11.4" height="8.2" fill="#1e9bf0"/><path d="M0 8.2 L11.4 6 V8.8 H0 Z" fill="#45b4ff"/></svg><span class="t" style="top:314.07px;font-size:9.2px;color:#fff;left:289.20px;transform:scaleX(0.8778);">Desktop</span><svg style="left:275px;top:329.4px" width="10.4" height="11" viewBox="0 0 10.4 11"><path d="M3.4 0 H7 V5.2 H10.2 L5.2 10.6 L0.2 5.2 H3.4 Z" fill="#1e90f0"/></svg><span class="t" style="top:330.87px;font-size:9.2px;color:#fff;left:289.20px;transform:scaleX(0.9108);">Downloads</span><svg style="left:276.4px;top:346px" width="8.4" height="11" viewBox="0 0 8.4 11"><path d="M0 0 H6 L8.4 2.4 V11 H0 Z" fill="#f2f2f2"/><rect x="1.6" y="2.2" width="3.2" height="1" fill="#6aa7e0"/><rect x="1.6" y="4.4" width="5.2" height="3" fill="#4aa0e8"/><rect x="1.6" y="8.4" width="5.2" height="1" fill="#8ab8e0"/></svg><span class="t" style="top:347.67px;font-size:9.2px;color:#fff;left:289.20px;transform:scaleX(0.9167);">Documents</span><svg style="left:274.8px;top:364px" width="11.4" height="8.6" viewBox="0 0 11.4 8.6"><rect width="11.4" height="8.6" fill="#f2f2f2"/><rect x="1" y="1" width="9.4" height="6.6" fill="#b8dcf6"/><path d="M1 5.6 Q4 3.4 7 5 L10.4 4.6 V7.6 H1 Z" fill="#2f6f5a"/></svg><span class="t" style="top:364.47px;font-size:9.2px;color:#fff;left:289.20px;transform:scaleX(0.8734);">Pictures</span><svg style="left:351.8px;top:314.6px" width="8" height="8" viewBox="0 0 8 8"><path d="M4.4 0.4 L7.4 3.4 L6.4 3.8 L5 5.2 L4.8 7 L0.9 3.2 L2.6 3 L4 1.4 Z M2.8 5 L0.3 7.6" fill="#9a9a9a" stroke="#9a9a9a" stroke-width="0.8"/></svg><svg style="left:351.8px;top:331.4px" width="8" height="8" viewBox="0 0 8 8"><path d="M4.4 0.4 L7.4 3.4 L6.4 3.8 L5 5.2 L4.8 7 L0.9 3.2 L2.6 3 L4 1.4 Z M2.8 5 L0.3 7.6" fill="#9a9a9a" stroke="#9a9a9a" stroke-width="0.8"/></svg><svg style="left:351.8px;top:348.2px" width="8" height="8" viewBox="0 0 8 8"><path d="M4.4 0.4 L7.4 3.4 L6.4 3.8 L5 5.2 L4.8 7 L0.9 3.2 L2.6 3 L4 1.4 Z M2.8 5 L0.3 7.6" fill="#9a9a9a" stroke="#9a9a9a" stroke-width="0.8"/></svg><svg style="left:351.8px;top:365px" width="8" height="8" viewBox="0 0 8 8"><path d="M4.4 0.4 L7.4 3.4 L6.4 3.8 L5 5.2 L4.8 7 L0.9 3.2 L2.6 3 L4 1.4 Z M2.8 5 L0.3 7.6" fill="#9a9a9a" stroke="#9a9a9a" stroke-width="0.8"/></svg><svg style="left:275.8px;top:379.8px" width="9.6" height="11" viewBox="0 0 9.6 11"><path d="M0 0.4 Q0 0 0.4 0 H7.6 L9.6 1.6 V11 H0 Z" fill="#ffd966"/><path d="M7.6 0 L9.6 1.6 V11 H6.6 L7 8.6 L7.6 8 Z" fill="#f5c542"/><path d="M0 0 H7.6 V8 L7 8.6 L6.6 11 H0 Z" fill="#ffdf7a"/></svg><svg style="left:275.8px;top:396.5px" width="9.6" height="11" viewBox="0 0 9.6 11"><path d="M0 0.4 Q0 0 0.4 0 H7.6 L9.6 1.6 V11 H0 Z" fill="#ffd966"/><path d="M7.6 0 L9.6 1.6 V11 H6.6 L7 8.6 L7.6 8 Z" fill="#f5c542"/><path d="M0 0 H7.6 V8 L7 8.6 L6.6 11 H0 Z" fill="#ffdf7a"/></svg><svg style="left:275.8px;top:413.4px" width="9.6" height="11" viewBox="0 0 9.6 11"><path d="M0 0.4 Q0 0 0.4 0 H7.6 L9.6 1.6 V11 H0 Z" fill="#ffd966"/><path d="M7.6 0 L9.6 1.6 V11 H6.6 L7 8.6 L7.6 8 Z" fill="#f5c542"/><path d="M0 0 H7.6 V8 L7 8.6 L6.6 11 H0 Z" fill="#ffdf7a"/></svg><span class="t" style="top:381.17px;font-size:9.2px;color:#fff;left:289.20px;transform:scaleX(0.8269);">Backup_03_03</span><span class="t" style="top:397.87px;font-size:9.2px;color:#fff;left:289.20px;transform:scaleX(0.7511);">CASES</span><span class="t" style="top:414.67px;font-size:9.2px;color:#fff;left:289.20px;transform:scaleX(0.9223);">lp</span><svg style="left:276px;top:429.6px" width="8.4" height="11.4" viewBox="0 0 8.4 11.4"><ellipse cx="2.4" cy="9.1" rx="2.4" ry="2" fill="#1e9bf0"/><path d="M3.6 9.2 V0.3 H4.7 C5.2 2.6 8.6 3.6 7.9 6.6 C7.7 7.8 7 8.8 6.2 9.4 C7.2 7.6 7 5.6 4.8 4.4 V9.2 Z" fill="#1e9bf0"/></svg><span class="t" style="top:431.47px;font-size:9.2px;color:#fff;left:289.20px;transform:scaleX(0.9083);">Music</span><svg style="left:268.8px;top:453px" width="11.6" height="10.6" viewBox="0 0 12 10.6"><rect x="0.4" y="0" width="11.2" height="7.4" fill="#29a3f5"/><path d="M0.4 7.4 L11.6 5 V7.4 Z" fill="#55bcff"/><rect x="4.6" y="7.4" width="2.8" height="1.8" fill="#9a9a9a"/><rect x="1.6" y="9.2" width="8.8" height="1.2" fill="#d8d8d8"/></svg><span class="t" style="top:453.57px;font-size:9.2px;color:#fff;left:284.20px;transform:scaleX(0.8199);">This PC</span><svg style="left:274.8px;top:470.4px" width="10.8" height="9.4" viewBox="0 0 10.8 9.4"><path d="M0.4 0 H2 V1.8 H0.4 Z M2.4 0 H4 V1.8 H2.4 Z M0.4 2.2 H2 V4 H0.4 Z M2.4 2.2 H4 V4 H2.4 Z" fill="#29b6f6"/><path d="M1.6 4.6 H9.2 L10.6 6.6 V9.2 H0.2 V6.6 Z" fill="#c8c8c8"/><rect x="0.2" y="6.6" width="10.4" height="2.6" fill="#e8e8e8"/><rect x="7.8" y="7.4" width="1.6" height="0.9" fill="#2fae3c"/></svg><span class="t" style="top:470.67px;font-size:9.2px;color:#fff;left:289.50px;transform:scaleX(0.8836);">Windows 10 (C:)</span><span class="t" style="top:286.87px;font-size:9.2px;color:#fff;left:388.00px;transform:scaleX(0.9178);">Name</span><svg style="left:471.6px;top:282.4px" width="6.4" height="3.6" viewBox="0 0 6.4 3.6"><path d="M0.5 3.1 L3.2 0.6 L5.9 3.1" stroke="#aaa" stroke-width="0.9" fill="none"/></svg><div class="a" style="left:565.6px;top:281.5px;width:1px;height:17.3px;background:#5a5a5a;"></div><div class="a" style="left:666.2px;top:281.5px;width:1px;height:17.3px;background:#5a5a5a;"></div><div class="a" style="left:750.4px;top:281.5px;width:1px;height:17.3px;background:#5a5a5a;"></div><div class="a" style="left:806.4px;top:281.5px;width:1px;height:17.3px;background:#5a5a5a;"></div><span class="t" style="top:286.87px;font-size:9.2px;color:#fff;left:570.00px;transform:scaleX(0.9244);">Date modified</span><span class="t" style="top:286.87px;font-size:9.2px;color:#fff;left:671.10px;transform:scaleX(0.8132);">Type</span><span class="t" style="top:286.87px;font-size:9.2px;color:#fff;left:754.20px;transform:scaleX(0.8056);">Size</span><div class="a" style="left:386.3px;top:333.3px;width:418px;height:14.5px;background:#777;"></div><svg style="left:389.8px;top:305.2px" width="9.4" height="10.8" viewBox="0 0 9.6 11"><path d="M0 0.4 Q0 0 0.4 0 H7.6 L9.6 1.6 V11 H0 Z" fill="#ffd966"/><path d="M7.6 0 L9.6 1.6 V11 H6.6 L7 8.6 L7.6 8 Z" fill="#f5c542"/><path d="M0 0 H7.6 V8 L7 8.6 L6.6 11 H0 Z" fill="#ffdf7a"/></svg><svg style="left:389.8px;top:320px" width="9.4" height="10.8" viewBox="0 0 9.6 11"><path d="M0 0.4 Q0 0 0.4 0 H7.6 L9.6 1.6 V11 H0 Z" fill="#ffd966"/><path d="M7.6 0 L9.6 1.6 V11 H6.6 L7 8.6 L7.6 8 Z" fill="#f5c542"/><path d="M0 0 H7.6 V8 L7 8.6 L6.6 11 H0 Z" fill="#ffdf7a"/></svg><svg style="left:390.6px;top:335px" width="7.8" height="10" viewBox="0 0 7.8 10"><path d="M0 0 H5.4 L7.8 2.4 V10 H0 Z" fill="#fafafa"/><path d="M5.4 0 V2.4 H7.8 Z" fill="#cfcfcf"/></svg><span class="t" style="top:306.67px;font-size:9.2px;color:#fff;left:402.50px;transform:scaleX(0.8369);">ff_00001</span><span class="t" style="top:321.97px;font-size:9.2px;color:#fff;left:402.50px;transform:scaleX(0.8333);">Frml_0001</span><span class="t" style="top:336.37px;font-size:9.2px;color:#fff;left:402.50px;transform:scaleX(0.8954);">0001.dmp</span><span class="t" style="top:306.67px;font-size:9.2px;color:#fff;left:570.00px;transform:scaleX(0.8731);">2/15/2022 6:22 PM</span><span class="t" style="top:321.97px;font-size:9.2px;color:#fff;left:570.00px;transform:scaleX(0.8731);">2/15/2022 6:22 PM</span><span class="t" style="top:336.37px;font-size:9.2px;color:#e4e4e4;left:570.00px;transform:scaleX(0.8769);">3/9/2022 4:02 PM</span><span class="t" style="top:306.67px;font-size:9.2px;color:#fff;left:671.10px;transform:scaleX(0.8923);">File folder</span><span class="t" style="top:321.97px;font-size:9.2px;color:#fff;left:671.10px;transform:scaleX(0.8923);">File folder</span><span class="t" style="top:336.37px;font-size:9.2px;color:#e4e4e4;left:671.10px;transform:scaleX(0.8668);">DMP File</span><span class="t" style="top:336.37px;font-size:9.2px;color:#e4e4e4;left:757.10px;transform:scaleX(0.8128);">163,454,97...</span><div class="a" style="left:252px;top:482.3px;width:578px;height:53.2px;background:#333;"></div><span class="t" style="top:492.97px;font-size:9.2px;color:#fff;left:343.60px;transform:scaleX(0.8647);">File name:</span><div class="a" style="left:384.2px;top:489px;width:293.4px;height:16.2px;background:#333;border:1px solid #6a6a6a;"></div><span class="t" style="top:493.17px;font-size:9.2px;color:#fff;left:387.60px;transform:scaleX(0.8856);">0001.dmp</span><svg style="left:668.8px;top:495.4px" width="6.4" height="4" viewBox="0 0 6.4 4"><path d="M0.5 0.5 L3.2 3.3 L5.9 0.5" stroke="#ccc" stroke-width="0.9" fill="none"/></svg><div class="a" style="left:686.4px;top:488.6px;width:131.2px;height:16.2px;background:#333;border:1px solid #6a6a6a;"></div><span class="t" style="top:492.97px;font-size:9.2px;color:#fff;left:689.30px;transform:scaleX(0.9199);">All</span><svg style="left:808px;top:495.2px" width="6.4" height="4" viewBox="0 0 6.4 4"><path d="M0.5 0.5 L3.2 3.3 L5.9 0.5" stroke="#ccc" stroke-width="0.9" fill="none"/></svg><div class="a" style="left:686.4px;top:509px;width:61.6px;height:17.8px;background:#333;border:1.4px solid #fff;"></div><div class="a" style="left:737px;top:511.6px;width:1px;height:12.6px;background:#bbb;"></div><svg style="left:739.2px;top:516.6px" width="5.8" height="3.4" viewBox="0 0 5.8 3.4"><path d="M0 0 H5.8 L2.9 3.4 Z" fill="#eee"/></svg><span class="t" style="top:513.77px;font-size:9.2px;color:#fff;left:701.80px;transform:scaleX(0.8984);">Open</span><div class="a" style="left:756.1px;top:509px;width:61.6px;height:17.8px;background:#333;border:1.2px solid #d0d0d0;"></div><span class="t" style="top:513.77px;font-size:9.2px;color:#fff;left:774.60px;transform:scaleX(0.8808);">Cancel</span><div class="a" style="left:826.4px;top:531.6px;width:1.1px;height:1.1px;background:#aaa;"></div><div class="a" style="left:824.4px;top:531.6px;width:1.1px;height:1.1px;background:#aaa;"></div><div class="a" style="left:822.4px;top:531.6px;width:1.1px;height:1.1px;background:#aaa;"></div><div class="a" style="left:826.4px;top:529.6px;width:1.1px;height:1.1px;background:#aaa;"></div><div class="a" style="left:824.4px;top:529.6px;width:1.1px;height:1.1px;background:#aaa;"></div><div class="a" style="left:826.4px;top:527.6px;width:1.1px;height:1.1px;background:#aaa;"></div>
</body>
</html>
